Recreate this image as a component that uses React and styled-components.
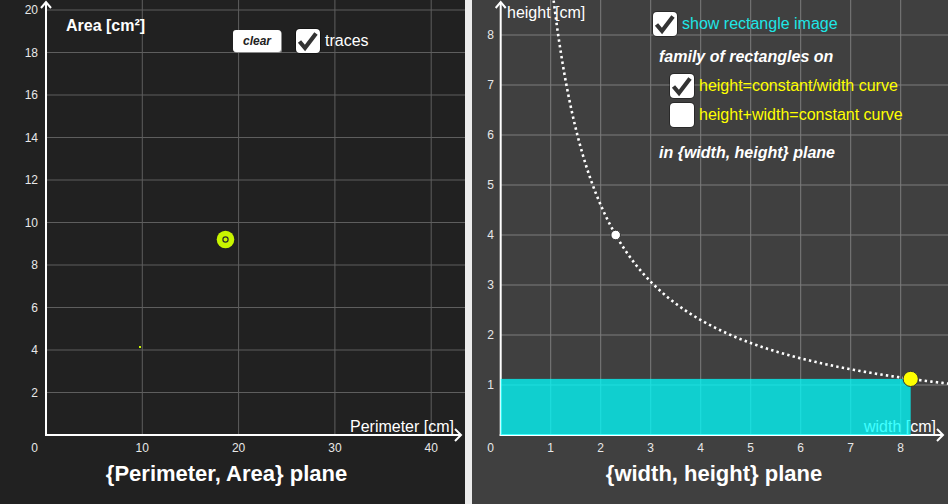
import React from 'react';
import styled, { createGlobalStyle } from 'styled-components';

const GlobalStyle = createGlobalStyle`
  html, body { margin: 0; padding: 0; background: #ececec; }
  body { font-family: "Liberation Sans", Arial, sans-serif; }
  #root { width: 948px; height: 504px; }
`;

const Page = styled.div`
  display: flex;
  width: 948px;
  height: 504px;
  overflow: hidden;
  background: #ececec;
`;

const Panel = styled.section`
  display: flex;
  flex-direction: column;
  flex: none;
  width: ${(p) => p.$w}px;
  height: 504px;
  background: ${(p) => p.$bg};
`;

const Divider = styled.div`
  flex: none;
  width: 7px;
  background: #ececec;
`;

const ChartArea = styled.div`
  position: relative;
  flex: none;
  height: 461px;
`;

const Plot = styled.svg`
  display: block;
  width: 100%;
  height: 100%;
  font-family: "Liberation Sans", Arial, sans-serif;
`;

const Title = styled.h2`
  margin: 0;
  padding: 0 ${(p) => p.$pr || 0}px 0 ${(p) => p.$pl || 0}px;
  font: bold 22px/26px "Liberation Sans", Arial, sans-serif;
  color: #ffffff;
  text-align: center;
`;

const Controls = styled.div`
  position: absolute;
  left: 233px;
  top: 29px;
  display: flex;
  align-items: center;
`;

const ClearButton = styled.button`
  width: 48px;
  height: 22px;
  margin-right: 15px;
  padding: 0;
  border: none;
  border-radius: 3px;
  background: #ffffff;
  box-shadow: 1px 1px 0 #8a8a8a;
  font: italic bold 12px "Liberation Sans", Arial, sans-serif;
  color: #222;
  cursor: pointer;
`;

const CheckRow = styled.label`
  display: flex;
  align-items: center;
  gap: 5px;
  margin-left: ${(p) => p.$indent || 0}px;
  margin-top: ${(p) => p.$mt || 0}px;
  font: 16px/20px "Liberation Sans", Arial, sans-serif;
  color: ${(p) => p.$color};
  white-space: nowrap;
`;

const Box = styled.span`
  display: flex;
  align-items: center;
  justify-content: center;
  flex: none;
  width: 24px;
  height: 24px;
  border-radius: 4px;
  background: #ffffff;
  box-shadow: 0 0 0 1px rgba(0, 0, 0, 0.35);
`;

const Legend = styled.div`
  position: absolute;
  left: 181px;
  top: 12px;
  display: flex;
  flex-direction: column;
  align-items: flex-start;
`;

const LegendHeading = styled.div`
  margin-left: 6px;
  margin-top: ${(p) => p.$mt}px;
  font: italic bold 16px/20px "Liberation Sans", Arial, sans-serif;
  color: #ffffff;
  white-space: nowrap;
`;

function CheckBox({ checked }) {
  return (
    <Box>
      {checked && (
        <svg width="24" height="24" viewBox="0 0 24 24">
          <path d="M3.5 12.5 L9 19 L20 4.5" fill="none" stroke="#333" strokeWidth="4.2" strokeLinejoin="miter" />
        </svg>
      )}
    </Box>
  );
}

/* ---------- left chart geometry ---------- */
const L = { ox: 46, oy: 435, sx: 9.63, sy: 21.25 };
const lx = (v) => L.ox + v * L.sx;
const ly = (v) => L.oy - v * L.sy;

function LeftChart() {
  const vx = [10, 20, 30, 40];
  const hy = [2, 4, 6, 8, 10, 12, 14, 16, 18, 20];
  const P = 18.64;
  const A = 9.2;
  return (
    <Plot viewBox="0 0 465 461">
      {vx.map((v) => (
        <line key={'v' + v} x1={lx(v)} x2={lx(v)} y1={0} y2={L.oy} stroke="#5e5e5e" strokeWidth="1" />
      ))}
      {hy.map((v) => (
        <line key={'h' + v} x1={L.ox} x2={465} y1={ly(v)} y2={ly(v)} stroke="#5e5e5e" strokeWidth="1" />
      ))}
      <line x1={L.ox} x2={L.ox} y1={L.oy + 1} y2={2} stroke="#fff" strokeWidth="2" />
      <polyline points={`${L.ox - 5},8 ${L.ox},2 ${L.ox + 5},8`} fill="none" stroke="#fff" strokeWidth="2" />
      <line x1={L.ox - 1} x2={461} y1={L.oy} y2={L.oy} stroke="#fff" strokeWidth="2" />
      <polyline points={`455,${L.oy - 6} 461,${L.oy} 455,${L.oy + 6}`} fill="none" stroke="#fff" strokeWidth="2" />
      {hy.map((v) => (
        <text key={'ty' + v} x={38} y={ly(v)} textAnchor="end" dominantBaseline="central" fontSize="12" fill="#e8e8e8">
          {v}
        </text>
      ))}
      <text x={38} y={448} textAnchor="end" dominantBaseline="central" fontSize="12" fill="#e8e8e8">0</text>
      {vx.map((v) => (
        <text key={'tx' + v} x={lx(v)} y={448} textAnchor="middle" dominantBaseline="central" fontSize="12" fill="#e8e8e8">
          {v}
        </text>
      ))}
      <text x={66} y={31} fontSize="16" fontWeight="bold" fill="#fff">Area [cm²]</text>
      <text x={454} y={432} textAnchor="end" fontSize="16" fill="#fff">Perimeter [cm]</text>
      <rect x={139} y={346} width={2} height={2} fill="#c8f500" />
      <circle cx={lx(P)} cy={ly(A)} r={8.8} fill="#c8f500" />
      <circle cx={lx(P)} cy={ly(A)} r={2.6} fill="#c8f500" stroke="#2a2a2a" strokeWidth="1.2" />
    </Plot>
  );
}

/* ---------- right chart geometry ---------- */
const R = { ox: 28.7, oy: 435, s: 50 };
const rx = (v) => R.ox + v * R.s;
const ry = (v) => R.oy - v * R.s;
const C = 9.2;

function curvePath() {
  const pts = [];
  const w0 = C / 8.8;
  for (let i = 0; i <= 400; i++) {
    const w = w0 + ((9.6 - w0) * i) / 400;
    pts.push(`${rx(w).toFixed(2)},${ry(C / w).toFixed(2)}`);
  }
  return 'M' + pts.join(' L');
}

function RightChart() {
  const vx = [1, 2, 3, 4, 5, 6, 7, 8, 9];
  const hy = [1, 2, 3, 4, 5, 6, 7, 8];
  const W = 8.2;
  const H = C / W;
  return (
    <Plot viewBox="0 0 476 461">
      {vx.map((v) => (
        <line key={'v' + v} x1={rx(v)} x2={rx(v)} y1={0} y2={R.oy} stroke="#7c7c7c" strokeWidth="1" />
      ))}
      {hy.map((v) => (
        <line key={'h' + v} x1={R.ox} x2={476} y1={ry(v)} y2={ry(v)} stroke="#7c7c7c" strokeWidth="1" />
      ))}
      <line x1={R.ox} x2={R.ox} y1={R.oy + 1} y2={2} stroke="#fff" strokeWidth="2" />
      <polyline points={`${R.ox - 5},8 ${R.ox},2 ${R.ox + 5},8`} fill="none" stroke="#fff" strokeWidth="2" />
      <line x1={R.ox - 1} x2={471} y1={R.oy} y2={R.oy} stroke="#fff" strokeWidth="2" />
      <polyline points={`465,${R.oy - 6} 471,${R.oy} 465,${R.oy + 6}`} fill="none" stroke="#fff" strokeWidth="2" />
      {hy.map((v) => (
        <text key={'ty' + v} x={22} y={ry(v)} textAnchor="end" dominantBaseline="central" fontSize="12" fill="#e8e8e8">
          {v}
        </text>
      ))}
      <text x={22} y={448} textAnchor="end" dominantBaseline="central" fontSize="12" fill="#e8e8e8">0</text>
      {vx.slice(0, 8).map((v) => (
        <text key={'tx' + v} x={rx(v)} y={448} textAnchor="middle" dominantBaseline="central" fontSize="12" fill="#e8e8e8">
          {v}
        </text>
      ))}
      <text x={35} y={18} fontSize="16" fill="#fff">height [cm]</text>
      <text x={464} y={432} textAnchor="end" fontSize="16" fill="#fff">width [cm]</text>
      <rect x={R.ox} y={ry(H)} width={rx(W) - R.ox} height={R.oy - ry(H)} fill="rgba(0,255,255,0.75)" />
      <path d={curvePath()} fill="none" stroke="#fff" strokeWidth="2.6" strokeDasharray="2.4 3.2" />
      <circle cx={rx(2.3)} cy={ry(4)} r={4.8} fill="#fff" stroke="#333" strokeWidth="1" />
      <circle cx={rx(W)} cy={ry(H)} r={7.6} fill="#ffff00" stroke="#333" strokeWidth="1" />
    </Plot>
  );
}

export default function App() {
  return (
    <>
      <GlobalStyle />
      <Page>
        <Panel $w={465} $bg="#212121">
          <ChartArea>
            <LeftChart />
            <Controls>
              <ClearButton type="button">clear</ClearButton>
              <CheckRow $color="#ffffff">
                <CheckBox checked />
                traces
              </CheckRow>
            </Controls>
          </ChartArea>
          <Title $pr={12}>{'{Perimeter, Area} plane'}</Title>
        </Panel>
        <Divider />
        <Panel $w={476} $bg="#404040">
          <ChartArea>
            <RightChart />
            <Legend>
              <CheckRow $color="#1ee6e6">
                <CheckBox checked />
                show rectangle image
              </CheckRow>
              <LegendHeading $mt={11}>family of rectangles on</LegendHeading>
              <CheckRow $color="#ffff00" $indent={17} $mt={7}>
                <CheckBox checked />
                height=constant/width curve
              </CheckRow>
              <CheckRow $color="#ffff00" $indent={17} $mt={5}>
                <CheckBox />
                height+width=constant curve
              </CheckRow>
              <LegendHeading $mt={16}>in {'{width, height}'} plane</LegendHeading>
            </Legend>
          </ChartArea>
          <Title $pl={8}>{'{width, height} plane'}</Title>
        </Panel>
      </Page>
    </>
  );
}
